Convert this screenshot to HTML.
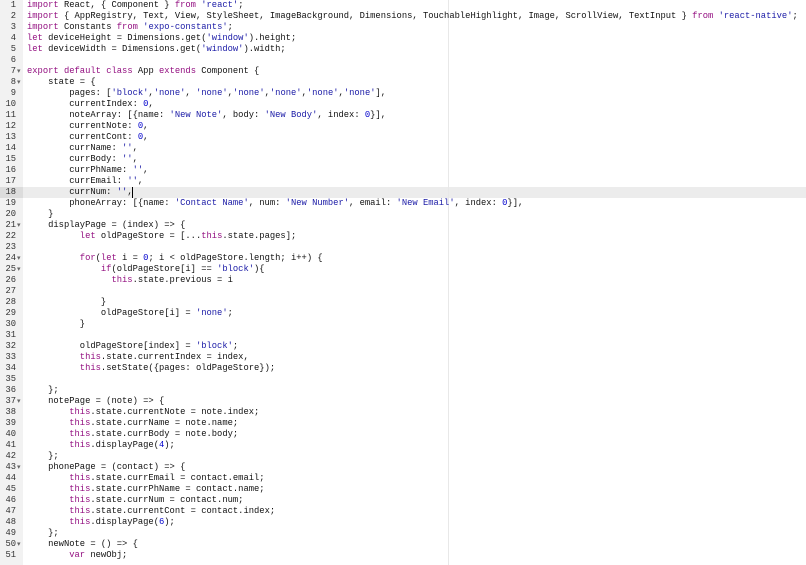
<!DOCTYPE html>
<html><head><meta charset="utf-8"><style>
html,body{margin:0;padding:0;background:#fff;width:806px;height:565px;overflow:hidden}
#g{position:absolute;left:0;top:0;width:23px;height:565px;background:#f2f2f2}
#pm{position:absolute;left:448px;top:0;width:1px;height:565px;background:#e8e8e8}
.al{position:absolute;left:23px;top:187px;width:783px;height:11px;background:#ececec}
.alg{position:absolute;left:0;top:187px;width:23px;height:11px;background:#dcdcdc}
.ln{position:absolute;left:0;width:16px;text-align:right;font:8.8px/11px "Liberation Mono",monospace;color:#333}
.fd{position:absolute;left:17px;font:7px/11px "DejaVu Sans",sans-serif;color:#666}
#c{position:absolute;left:27px;top:0;font:8.8px/11px "Liberation Mono",monospace;color:#111;white-space:normal}
#c div{height:11px;white-space:pre}
.k{color:#930f80}.s{color:#1a1aa6}.n{color:#0000cd}
#cur{position:absolute;left:132px;top:187px;width:1px;height:11px;background:#000}
</style></head><body>
<div id="g"></div><div class="alg"></div><div class="al"></div><div id="pm"></div>
<div id="c">
<div><span class="k">import</span> React, { Component } <span class="k">from</span> <span class="s">'react'</span>;</div>
<div><span class="k">import</span> { AppRegistry, Text, View, StyleSheet, ImageBackground, Dimensions, TouchableHighlight, Image, ScrollView, TextInput } <span class="k">from</span> <span class="s">'react-native'</span>;</div>
<div><span class="k">import</span> Constants <span class="k">from</span> <span class="s">'expo-constants'</span>;</div>
<div><span class="k">let</span> deviceHeight = Dimensions.get(<span class="s">'window'</span>).height;</div>
<div><span class="k">let</span> deviceWidth = Dimensions.get(<span class="s">'window'</span>).width;</div>
<div></div>
<div><span class="k">export</span> <span class="k">default</span> <span class="k">class</span> App <span class="k">extends</span> Component {</div>
<div>    state = {</div>
<div>        pages: [<span class="s">'block'</span>,<span class="s">'none'</span>, <span class="s">'none'</span>,<span class="s">'none'</span>,<span class="s">'none'</span>,<span class="s">'none'</span>,<span class="s">'none'</span>],</div>
<div>        currentIndex: <span class="n">0</span>,</div>
<div>        noteArray: [{name: <span class="s">'New Note'</span>, body: <span class="s">'New Body'</span>, index: <span class="n">0</span>}],</div>
<div>        currentNote: <span class="n">0</span>,</div>
<div>        currentCont: <span class="n">0</span>,</div>
<div>        currName: <span class="s">''</span>,</div>
<div>        currBody: <span class="s">''</span>,</div>
<div>        currPhName: <span class="s">''</span>,</div>
<div>        currEmail: <span class="s">''</span>,</div>
<div>        currNum: <span class="s">''</span>,</div>
<div>        phoneArray: [{name: <span class="s">'Contact Name'</span>, num: <span class="s">'New Number'</span>, email: <span class="s">'New Email'</span>, index: <span class="n">0</span>}],</div>
<div>    }</div>
<div>    displayPage = (index) =&gt; {</div>
<div>          <span class="k">let</span> oldPageStore = [...<span class="k">this</span>.state.pages];</div>
<div></div>
<div>          <span class="k">for</span>(<span class="k">let</span> i = <span class="n">0</span>; i &lt; oldPageStore.length; i++) {</div>
<div>              <span class="k">if</span>(oldPageStore[i] == <span class="s">'block'</span>){</div>
<div>                <span class="k">this</span>.state.previous = i</div>
<div></div>
<div>              }</div>
<div>              oldPageStore[i] = <span class="s">'none'</span>;</div>
<div>          }</div>
<div></div>
<div>          oldPageStore[index] = <span class="s">'block'</span>;</div>
<div>          <span class="k">this</span>.state.currentIndex = index,</div>
<div>          <span class="k">this</span>.setState({pages: oldPageStore});</div>
<div></div>
<div>    };</div>
<div>    notePage = (note) =&gt; {</div>
<div>        <span class="k">this</span>.state.currentNote = note.index;</div>
<div>        <span class="k">this</span>.state.currName = note.name;</div>
<div>        <span class="k">this</span>.state.currBody = note.body;</div>
<div>        <span class="k">this</span>.displayPage(<span class="n">4</span>);</div>
<div>    };</div>
<div>    phonePage = (contact) =&gt; {</div>
<div>        <span class="k">this</span>.state.currEmail = contact.email;</div>
<div>        <span class="k">this</span>.state.currPhName = contact.name;</div>
<div>        <span class="k">this</span>.state.currNum = contact.num;</div>
<div>        <span class="k">this</span>.state.currentCont = contact.index;</div>
<div>        <span class="k">this</span>.displayPage(<span class="n">6</span>);</div>
<div>    };</div>
<div>    newNote = () =&gt; {</div>
<div>        <span class="k">var</span> newObj;</div>
</div>
<div id="cur"></div>
<div class="ln" style="top:0">1</div><div class="ln" style="top:11px">2</div><div class="ln" style="top:22px">3</div><div class="ln" style="top:33px">4</div><div class="ln" style="top:44px">5</div><div class="ln" style="top:55px">6</div><div class="ln" style="top:66px">7</div><div class="ln" style="top:77px">8</div><div class="ln" style="top:88px">9</div><div class="ln" style="top:99px">10</div><div class="ln" style="top:110px">11</div><div class="ln" style="top:121px">12</div><div class="ln" style="top:132px">13</div><div class="ln" style="top:143px">14</div><div class="ln" style="top:154px">15</div><div class="ln" style="top:165px">16</div><div class="ln" style="top:176px">17</div><div class="ln" style="top:187px">18</div><div class="ln" style="top:198px">19</div><div class="ln" style="top:209px">20</div><div class="ln" style="top:220px">21</div><div class="ln" style="top:231px">22</div><div class="ln" style="top:242px">23</div><div class="ln" style="top:253px">24</div><div class="ln" style="top:264px">25</div><div class="ln" style="top:275px">26</div><div class="ln" style="top:286px">27</div><div class="ln" style="top:297px">28</div><div class="ln" style="top:308px">29</div><div class="ln" style="top:319px">30</div><div class="ln" style="top:330px">31</div><div class="ln" style="top:341px">32</div><div class="ln" style="top:352px">33</div><div class="ln" style="top:363px">34</div><div class="ln" style="top:374px">35</div><div class="ln" style="top:385px">36</div><div class="ln" style="top:396px">37</div><div class="ln" style="top:407px">38</div><div class="ln" style="top:418px">39</div><div class="ln" style="top:429px">40</div><div class="ln" style="top:440px">41</div><div class="ln" style="top:451px">42</div><div class="ln" style="top:462px">43</div><div class="ln" style="top:473px">44</div><div class="ln" style="top:484px">45</div><div class="ln" style="top:495px">46</div><div class="ln" style="top:506px">47</div><div class="ln" style="top:517px">48</div><div class="ln" style="top:528px">49</div><div class="ln" style="top:539px">50</div><div class="ln" style="top:550px">51</div>
<div class="fd" style="top:66px">▾</div><div class="fd" style="top:77px">▾</div><div class="fd" style="top:220px">▾</div><div class="fd" style="top:253px">▾</div><div class="fd" style="top:264px">▾</div><div class="fd" style="top:396px">▾</div><div class="fd" style="top:462px">▾</div><div class="fd" style="top:539px">▾</div>
</body></html>
